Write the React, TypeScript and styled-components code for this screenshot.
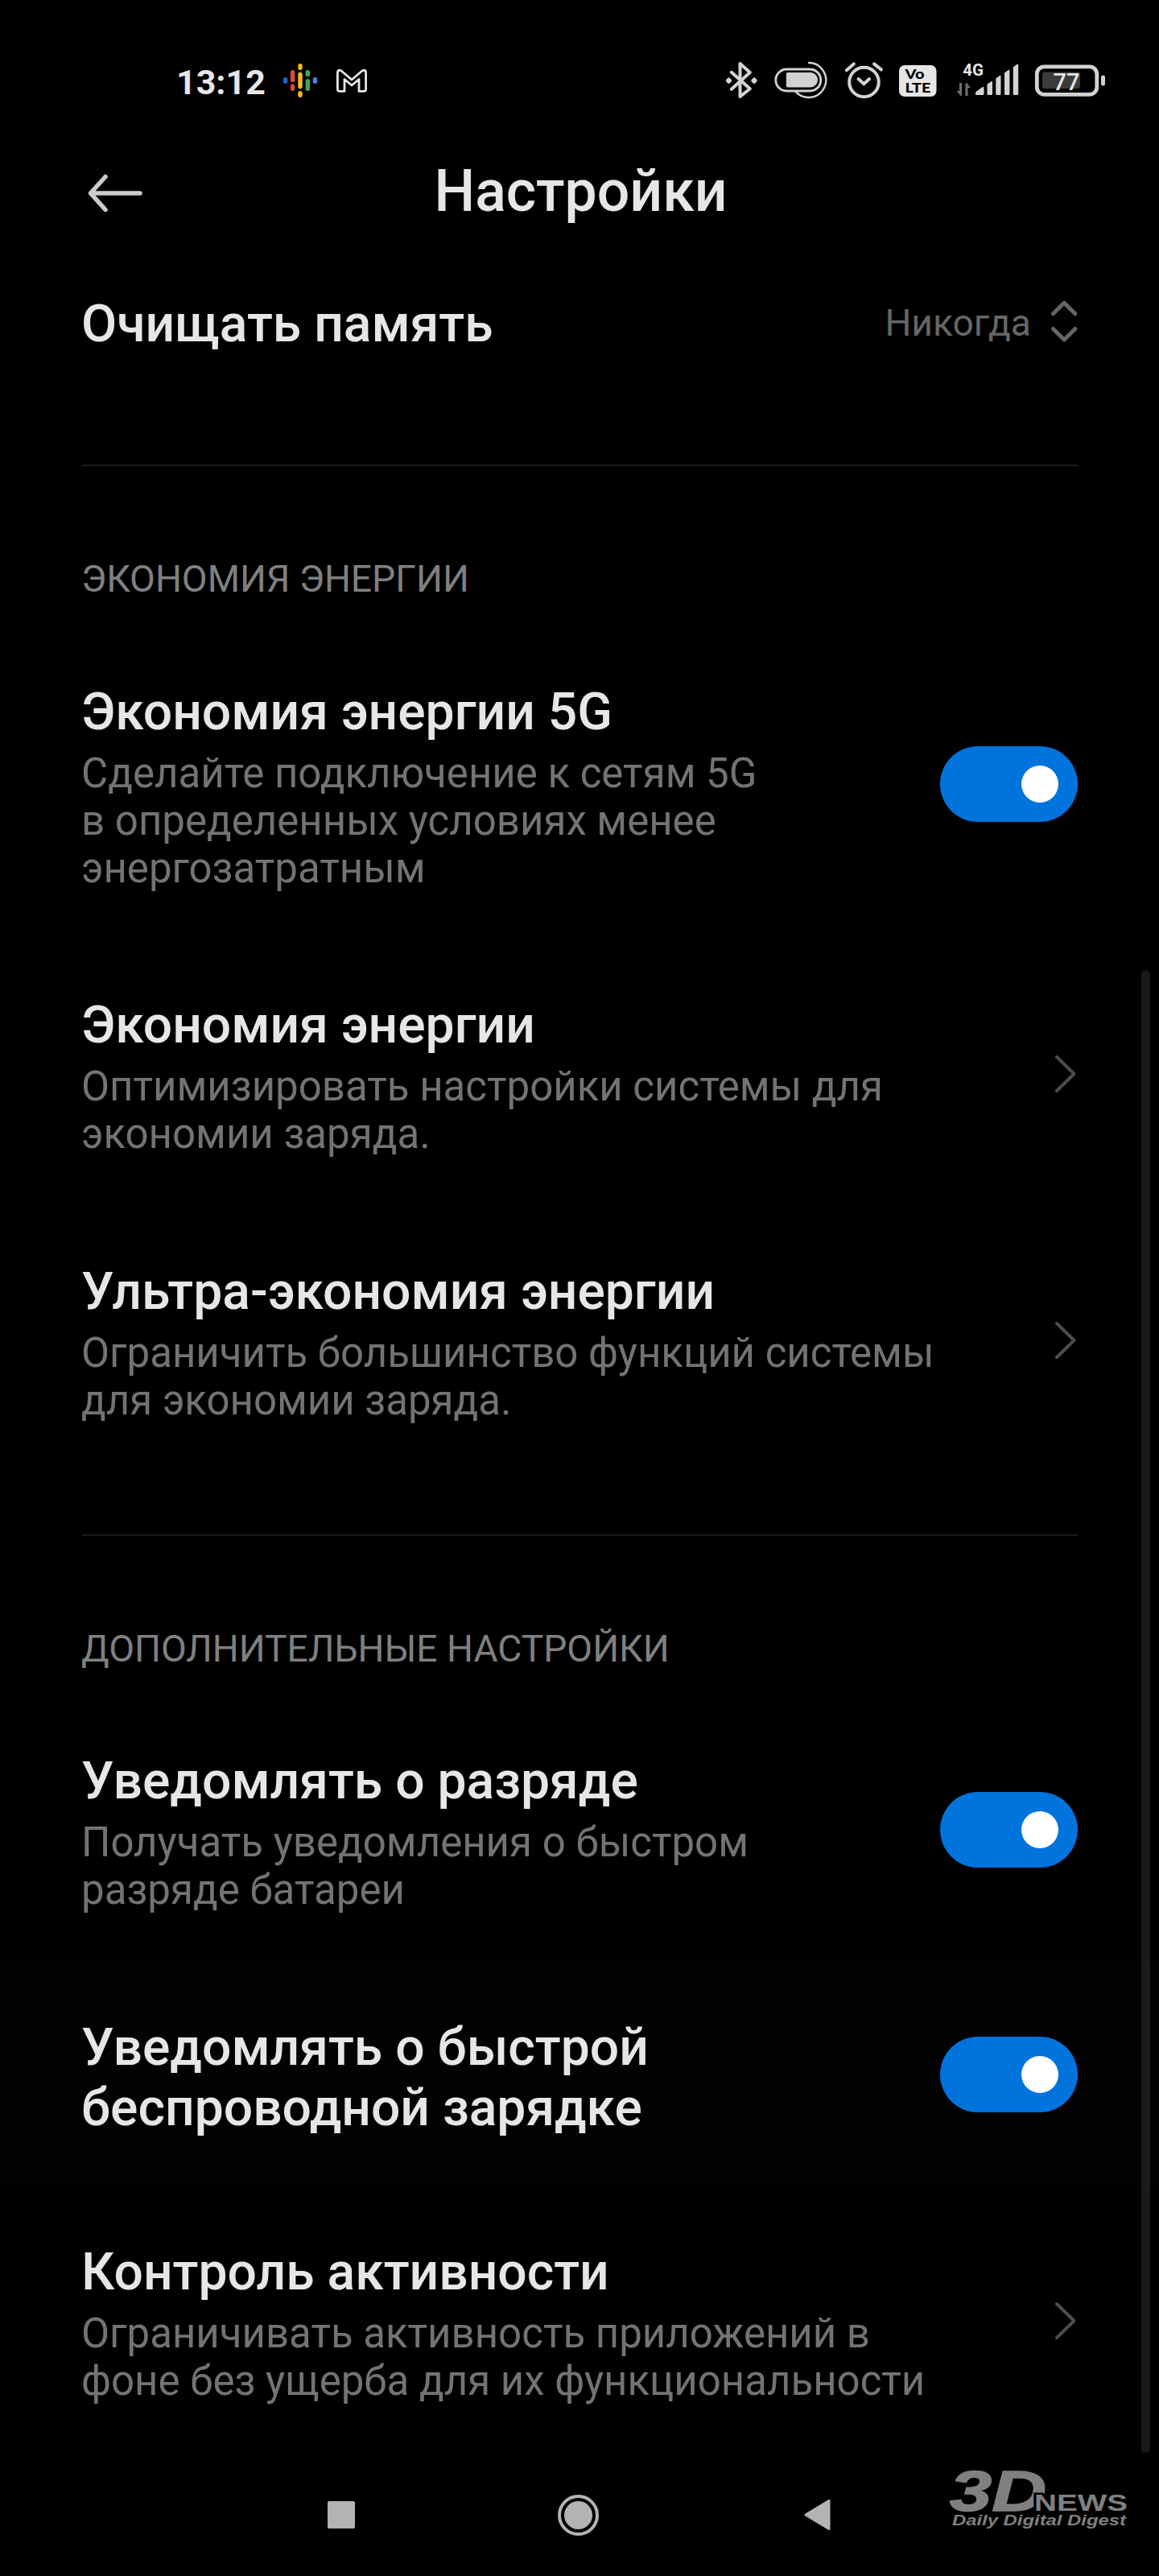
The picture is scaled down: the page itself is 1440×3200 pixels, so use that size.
import React from 'react';
import styled, { createGlobalStyle } from 'styled-components';

const GlobalStyle = createGlobalStyle`
  * { box-sizing: border-box; }
  body { margin: 0; background: #000; font-family: Roboto, "Noto Sans", sans-serif; }
  svg { display: block; flex: none; overflow: visible; }
`;

const Screen = styled.div`
  position: relative;
  display: flex;
  flex-direction: column;
  width: 1440px;
  height: 3200px;
  overflow: hidden;
  background: #000;
  color: #e6e6e6;
`;

const StatusBar = styled.div`
  display: flex;
  align-items: center;
  justify-content: space-between;
  height: 150px;
  padding: 50px 66px 0 219px;
`;

const StatusGroup = styled.div`
  display: flex;
  align-items: center;
`;

const StatusIcon = styled.svg<{ $after?: number }>`
  margin-right: ${(p) => p.$after ?? 0}px;
`;

const Clock = styled.span`
  margin-right: 22px;
  padding-top: 3px;
  font-size: 43px;
  line-height: 50px;
  font-weight: 700;
`;

const Header = styled.header`
  display: grid;
  grid-template-columns: 72px 1fr 72px;
  align-items: center;
  height: 146px;
  padding: 29px 99px 0 102px;
`;

const BackButton = styled.button`
  display: flex;
  width: 80px;
  padding: 4px 0 0 7px;
  border: 0;
  background: none;
`;

const PageTitle = styled.h1`
  margin: 0;
  text-align: center;
  font-size: 71.5px;
  line-height: 84px;
  font-weight: 500;
`;

const Section = styled.section`
  display: flex;
  flex-direction: column;
`;

const Divider = styled.div`
  height: 2px;
  margin: 76px 101px 0 102px;
  background: #1a1a1a;
`;

const Category = styled.h2`
  height: 200px;
  margin: 0;
  padding: 113px 101px 0;
  font-size: 46.2px;
  line-height: 55px;
  font-weight: 400;
  color: #808080;
`;

const Row = styled.div<{ $height: number; $pressed?: boolean }>`
  display: flex;
  align-items: center;
  justify-content: space-between;
  height: ${(p) => p.$height}px;
  padding: 0 101px;
  background: ${(p) => (p.$pressed ? '#020202' : 'transparent')};
`;

const RowText = styled.div`
  display: flex;
  flex-direction: column;
  gap: 9px;
  padding-top: 7px;
  white-space: pre-line;
`;

const RowTitle = styled.div`
  font-size: 64.2px;
  line-height: 75px;
  font-weight: 500;
`;

const RowNote = styled.div`
  font-size: 51px;
  line-height: 59px;
  color: #737373;
`;

const Picker = styled.div`
  display: flex;
  align-items: center;
  gap: 24px;
`;

const PickerValue = styled.span`
  padding-top: 6px;
  font-size: 46.2px;
  line-height: 55px;
  color: #666;
`;

const Switch = styled.div`
  display: flex;
  align-items: center;
  justify-content: flex-end;
  flex: none;
  width: 171px;
  height: 94px;
  padding-right: 24px;
  border-radius: 47px;
  background: #0073dd;
`;

const Knob = styled.div`
  width: 46px;
  height: 46px;
  border-radius: 50%;
  background: #fff;
`;

const ScrollThumb = styled.div`
  position: absolute;
  top: 1205px;
  right: 11px;
  width: 11px;
  height: 1842px;
  border-radius: 6px;
  background: #1a1a1a;
`;

const NavBar = styled.nav`
  display: flex;
  align-items: center;
  height: 152px;
  padding-left: 407px;
`;

const RecentKey = styled.div`
  width: 34px;
  height: 34px;
  border-radius: 2px;
  background: #b3b3b3;
`;

const HomeKey = styled.div`
  display: grid;
  place-items: center;
  width: 51px;
  height: 51px;
  margin-left: 252px;
  border: 4px solid #b3b3b3;
  border-radius: 50%;

  &::after {
    content: '';
    width: 35px;
    height: 35px;
    border-radius: 50%;
    background: #b3b3b3;
  }
`;

const BackKey = styled.svg`
  margin-left: 255px;
`;

const Watermark = styled.svg`
  position: absolute;
  left: 1176px;
  top: 3050px;
`;

const PodcastIcon = () => (
  <StatusIcon $after={24} width="42" height="42" viewBox="352 79 42 42" strokeWidth="5.4" strokeLinecap="round">
    <path d="M354.6 98.7v2.6" stroke="#1967c8" />
    <path d="M363.6 89.8v9.6M363.6 107.3v3" stroke="#db4a3f" />
    <path d="M373 81.7v2.6M373 92.5v15M373 115.7v2.6" stroke="#f5b921" />
    <path d="M382.3 89.8v2.6M382.3 100.7v9.6" stroke="#3ca757" />
    <path d="M391.4 98.7v2.6" stroke="#4a86e8" />
  </StatusIcon>
);

const MailIcon = () => (
  <StatusIcon width="38" height="29" viewBox="418 85 38 29" fill="none" stroke="#e6e6e6" strokeWidth="2.8" strokeLinejoin="round">
    <path d="M419.4 109.4V89.2q0-3.2 3-2.9 1.2.1 2 1L437 98l12.600-10.700q.8-.9 2-1 3-.3 3 2.900V109.400q0 3-2.600 3H446V97.500L437 105l-9-7.500v14.900h-6q-2.600 0-2.600-3Z" />
  </StatusIcon>
);

const BluetoothIcon = () => (
  <StatusIcon $after={21} width="40" height="46" viewBox="900.5 78 40 46" fill="none" stroke="#d2d2d2" strokeWidth="4" strokeLinecap="round" strokeLinejoin="round">
    <path d="M908.3 90.8L931.3 111.300L919 121V80L931.300 91L908.300 111.800" />
    <path d="M905 99.400l1.700 1.700-1.700 1.700-1.700-1.700zM936.500 99.400l1.700 1.700-1.700 1.700-1.700-1.700z" />
  </StatusIcon>
);

const PowerSaveIcon = () => (
  <StatusIcon $after={21} width="66" height="46" viewBox="961.5 78 66 46" fill="none" stroke="#d2d2d2">
    <rect x="963.3" y="87" width="56" height="27" rx="13.5" strokeWidth="2.8" />
    <path d="M978.300 91h28a9 9 0 0 1 0 18.500h-28a2 2 0 0 1-2-2V93a2 2 0 0 1 2-2z" fill="#d2d2d2" stroke="none" />
    <path d="M1004.500 79a21.500 21.500 0 1 1-16.500 35.600" strokeWidth="2.4" strokeLinecap="round" />
  </StatusIcon>
);

const AlarmIcon = () => (
  <StatusIcon $after={20} width="48" height="46" viewBox="1048.5 78 48 46" fill="none" stroke="#d2d2d2" strokeWidth="4" strokeLinecap="round" strokeLinejoin="round">
    <circle cx="1073" cy="103" r="18.3" />
    <path d="M1066 99l6.800 6.300 6.800-6.300M1051.300 88.300l9-7.900M1085.500 80.400l8.800 7" />
  </StatusIcon>
);

const VolteIcon = () => (
  <StatusIcon $after={24.5} width="47" height="39" viewBox="1116.5 80.8 47 39" fontFamily="Lato, sans-serif" fontWeight="900" fill="#000">
    <rect x="1116.5" y="80.8" width="46.5" height="39" rx="7" fill="#e6e6e6" />
    <text x="1124" y="97.7" fontSize="16.5" textLength="24" lengthAdjust="spacingAndGlyphs">Vo</text>
    <text x="1124" y="114.7" fontSize="17" textLength="32" lengthAdjust="spacingAndGlyphs">LTE</text>
  </StatusIcon>
);

const SignalIcon = () => (
  <StatusIcon $after={20} width="78" height="46" viewBox="1188 77 78 46" fill="#d2d2d2">
    <text x="1196.3" y="93.5" fontFamily="Roboto, sans-serif" fontSize="20.5" fontWeight="700" fill="#e6e6e6">4G</text>
    <path d="M1192 103h3v16h-1.500l-5-6h3.500zM1199.500 119v-16h1.500l5 6h-3.500v10z" fill="#707070" />
    <path d="M1212 115.500q0-1.500 1.500-2.200l7-5q2-1 2 .7v7.500q0 1.500-1.500 1.500h-8q-1 0-1-1z" />
    <path d="M1226.500 104.500l5-3.300q1.500-.7 1.500.8v14.500q0 1.500-1.500 1.500h-3.500q-1.500 0-1.500-1.500z" />
    <path d="M1237.300 97.500l4.700-3.500q1.500-.7 1.500.8v21.700q0 1.500-1.500 1.500h-3.200q-1.500 0-1.500-1.500z" />
    <path d="M1248 90.500l4.900-3.500q1.500-.7 1.500.8v28.700q0 1.500-1.500 1.500h-3.400q-1.500 0-1.500-1.500z" />
    <path d="M1258.800 83.500l4.900-3.700q1.500-.7 1.500.8v35.900q0 1.500-1.500 1.500h-3.400q-1.500 0-1.500-1.500z" />
  </StatusIcon>
);

const BatteryIcon = () => (
  <StatusIcon width="88" height="40" viewBox="1286 79.5 88 40">
    <rect x="1288.3" y="82.3" width="74.5" height="34.5" rx="9" fill="none" stroke="#d2d2d2" strokeWidth="4.8" />
    <rect x="1295" y="89" width="47" height="20.5" rx="3" fill="#3b3b3b" />
    <rect x="1368" y="93" width="5" height="13" rx="2.5" fill="#d2d2d2" />
    <text x="1308.5" y="111" fontFamily="Roboto, sans-serif" fontSize="29.5" fontWeight="500" fill="#e6e6e6" textLength="33" lengthAdjust="spacingAndGlyphs">77</text>
  </StatusIcon>
);

const Chevron = () => (
  <svg width="28" height="48" viewBox="0 0 28 48" fill="none" stroke="#4d4d4d" strokeWidth="4" strokeLinecap="round" strokeLinejoin="round">
    <path d="M2 3l21.500 21L2 45" />
  </svg>
);

const Toggle = () => (
  <Switch role="switch" aria-checked="true">
    <Knob />
  </Switch>
);

type Item = { title: string; note?: string; kind: 'switch' | 'link'; height: number; pressed?: boolean };

const powerItems: Item[] = [
  { title: 'Экономия энергии 5G', note: 'Сделайте подключение к сетям 5G\nв определенных условиях менее\nэнергозатратным', kind: 'switch', height: 389 },
  { title: 'Экономия энергии', note: 'Оптимизировать настройки системы для\nэкономии заряда.', kind: 'link', height: 331 },
  { title: 'Ультра-экономия энергии', note: 'Ограничить большинство функций системы\nдля экономии заряда.', kind: 'link', height: 331 },
];

const extraItems: Item[] = [
  { title: 'Уведомлять о разряде', note: 'Получать уведомления о быстром\nразряде батареи', kind: 'switch', height: 329 },
  { title: 'Уведомлять о быстрой\nбеспроводной зарядке', kind: 'switch', height: 280, pressed: true },
  { title: 'Контроль активности', note: 'Ограничивать активность приложений в\nфоне без ущерба для их функциональности', kind: 'link', height: 331 },
];

const SettingGroup = ({ label, items }: { label: string; items: Item[] }) => (
  <Section>
    <Divider />
    <Category>{label}</Category>
    {items.map((item) => (
      <Row key={item.title} $height={item.height} $pressed={item.pressed}>
        <RowText>
          <RowTitle>{item.title}</RowTitle>
          {item.note && <RowNote>{item.note}</RowNote>}
        </RowText>
        {item.kind === 'switch' ? <Toggle /> : <Chevron />}
      </Row>
    ))}
  </Section>
);

export default function App() {
  return (
    <>
      <GlobalStyle />
      <Screen>
        <StatusBar>
          <StatusGroup>
            <Clock>13:12</Clock>
            <PodcastIcon />
            <MailIcon />
          </StatusGroup>
          <StatusGroup>
            <BluetoothIcon />
            <PowerSaveIcon />
            <AlarmIcon />
            <VolteIcon />
            <SignalIcon />
            <BatteryIcon />
          </StatusGroup>
        </StatusBar>
        <Header>
          <BackButton aria-label="Назад">
            <svg width="70" height="50" viewBox="0 0 70 50" fill="none" stroke="#ccc" strokeWidth="5.5" strokeLinecap="round" strokeLinejoin="round">
              <path d="M65 25H4M22 4.500L3.500 25L22 45.500" />
            </svg>
          </BackButton>
          <PageTitle>Настройки</PageTitle>
        </Header>
        <Row $height={205}>
          <RowText>
            <RowTitle>Очищать память</RowTitle>
          </RowText>
          <Picker>
            <PickerValue>Никогда</PickerValue>
            <svg width="34" height="54" viewBox="1305 371.5 34 54" fill="none" stroke="#666" strokeWidth="5" strokeLinecap="round" strokeLinejoin="round">
              <path d="M1308.500 389.300l13.700-13.500 13.700 13.500M1308.500 408l13.700 13.500 13.700-13.500" />
            </svg>
          </Picker>
        </Row>
        <SettingGroup label="ЭКОНОМИЯ ЭНЕРГИИ" items={powerItems} />
        <SettingGroup label="ДОПОЛНИТЕЛЬНЫЕ НАСТРОЙКИ" items={extraItems} />
        <NavBar>
          <RecentKey />
          <HomeKey />
          <BackKey width="34" height="40" viewBox="0 0 34 40">
            <path d="M31 2.500V37.500L2 20Z" fill="#b3b3b3" stroke="#b3b3b3" strokeWidth="3" strokeLinejoin="round" />
          </BackKey>
        </NavBar>
        <ScrollThumb />
        <Watermark width="230" height="100" viewBox="1176 3050 230 100" fontFamily='"Liberation Sans", sans-serif' fontWeight="700" fill="#808080">
          <text x="1180" y="3119" fontSize="71" fontStyle="italic" textLength="120" lengthAdjust="spacingAndGlyphs" stroke="#808080" strokeWidth="1.5">3D</text>
          <text x="1285" y="3119" fontSize="29" textLength="116" lengthAdjust="spacingAndGlyphs" stroke="#000" strokeWidth="5" paintOrder="stroke">NEWS</text>
          <text x="1183" y="3137" fontSize="17.5" fontStyle="italic" textLength="216" lengthAdjust="spacingAndGlyphs">Daily Digital Digest</text>
        </Watermark>
      </Screen>
    </>
  );
}
